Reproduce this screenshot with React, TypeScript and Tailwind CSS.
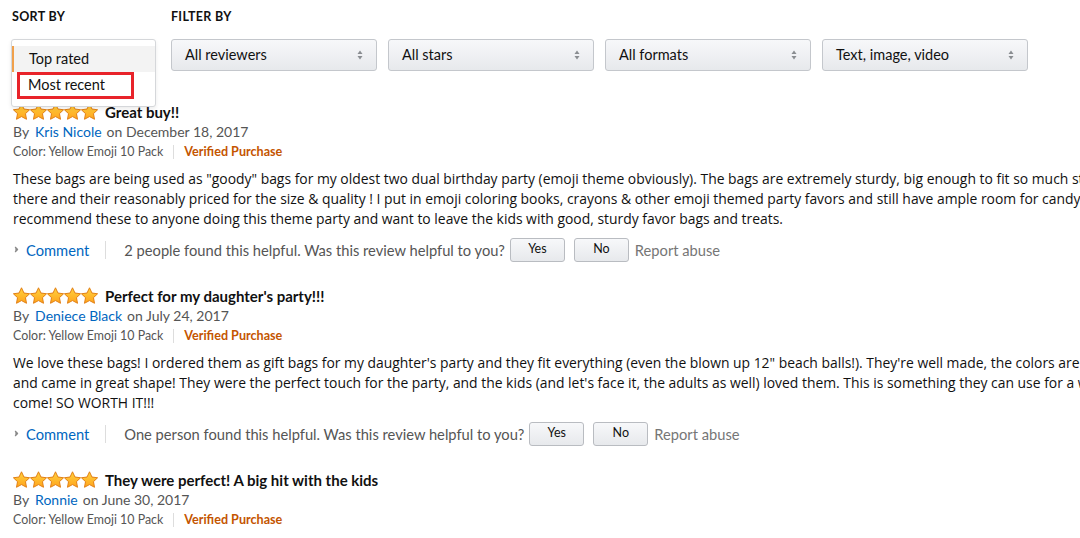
import { ChevronRight } from 'lucide-react'

const selects = ['All reviewers', 'All stars', 'All formats', 'Text, image, video']

const reviews = [
  {
    title: 'Great buy!!',
    author: 'Kris Nicole',
    date: 'December 18, 2017',
    lines: [
      'These bags are being used as "goody" bags for my oldest two dual birthday party (emoji theme obviously). The bags are extremely sturdy, big enough to fit so much stuff in',
      'there and their reasonably priced for the size & quality ! I put in emoji coloring books, crayons & other emoji themed party favors and still have ample room for candy (or whatever).',
      'recommend these to anyone doing this theme party and want to leave the kids with good, sturdy favor bags and treats.',
    ],
    helpful: '2 people found this helpful. Was this review helpful to you?',
  },
  {
    title: "Perfect for my daughter's party!!!",
    author: 'Deniece Black',
    date: 'July 24, 2017',
    lines: [
      'We love these bags! I ordered them as gift bags for my daughter\'s party and they fit everything (even the blown up 12" beach balls!). They\'re well made, the colors are bright',
      "and came in great shape! They were the perfect touch for the party, and the kids (and let's face it, the adults as well) loved them. This is something they can use for a while to",
      'come! SO WORTH IT!!!',
    ],
    helpful: 'One person found this helpful. Was this review helpful to you?',
  },
  {
    title: 'They were perfect! A big hit with the kids',
    author: 'Ronnie',
    date: 'June 30, 2017',
    lines: [],
    helpful: '',
  },
]

function Star() {
  return (
    <svg viewBox="1.3 1.1 21.4 20.8" className="w-[17px] h-[17px]">
      <defs>
        <linearGradient id="starFill" x1="0" y1="0" x2="0" y2="1">
          <stop offset="0" stopColor="#ffd23f" />
          <stop offset="1" stopColor="#ffa41c" />
        </linearGradient>
      </defs>
      <path
        d="M12 1.8l3.1 6.6 7.1.9-5.2 4.9 1.3 7.1L12 17.9l-6.3 3.4 1.3-7.1-5.2-4.9 7.1-.9z"
        fill="url(#starFill)"
        stroke="#e07b10"
        strokeWidth="1.2"
        strokeLinejoin="round"
      />
    </svg>
  )
}

function Stars() {
  return (
    <div className="flex items-center">
      {[0, 1, 2, 3, 4].map((i) => (
        <Star key={i} />
      ))}
    </div>
  )
}

function UpDown() {
  return (
    <svg viewBox="0 0 6 10" className="w-[6px] h-[10px]">
      <path d="M3 0.5L5.5 4H0.5z" fill="#8a8d91" />
      <path d="M3 9.5L5.5 6H0.5z" fill="#8a8d91" />
    </svg>
  )
}

function SelectBox({ label }: { label: string }) {
  return (
    <div className="w-[206px] h-[32px] rounded-[3px] border border-[#c4c7cc] bg-gradient-to-b from-[#f7f8fa] to-[#e7e9ec] flex items-center justify-between pl-[13px] pr-[13px] text-[14.5px] text-[#111]">
      <span>{label}</span>
      <UpDown />
    </div>
  )
}

function HelpButton({ label }: { label: string }) {
  return (
    <button className="w-[55px] h-[24px] rounded-[3px] border border-[#b9bcc1] bg-gradient-to-b from-[#f7f8fa] to-[#e7e9ec] text-[12.5px] text-[#111] flex items-center justify-center">
      {label}
    </button>
  )
}

function Review({ r }: { r: (typeof reviews)[number] }) {
  return (
    <div className="flex flex-col">
      <div className="flex items-center h-[20px] gap-[7px]">
        <Stars />
        <span className="font-bold text-[15px] text-[#111]">{r.title}</span>
      </div>
      <div className="h-[20px] flex items-center text-[14px] text-[#555]">
        <span>By</span>
        <span className="text-[#0066c0] ml-[6px]">{r.author}</span>
        <span className="ml-[5px]">on {r.date}</span>
      </div>
      <div className="h-[21px] flex items-center text-[12.4px] text-[#555]">
        <span>Color: Yellow Emoji 10 Pack</span>
        <span className="mx-[10px] w-px h-[14px] bg-[#ddd]" />
        <span className="font-bold text-[12.6px] text-[#c45500]">Verified Purchase</span>
      </div>
      {r.lines.length > 0 && (
        <>
          <div className="mt-[6px] font-['Open_Sans',sans-serif] text-[13.9px] leading-[20px] text-[#111] whitespace-nowrap">
            {r.lines.map((l, i) => (
              <div key={i}>{l}</div>
            ))}
          </div>
          <div className="mt-[9px] h-[24px] flex items-center text-[14.7px] whitespace-nowrap">
            <ChevronRight className="w-[9px] h-[9px] text-[#888] ml-[-1px]" strokeWidth={3} fill="#888" />
            <span className="text-[#0066c0] ml-[5px]">Comment</span>
            <span className="w-px h-[18px] bg-[#ddd] ml-[16px] mr-[18px]" />
            <span className="text-[#555]">{r.helpful}</span>
            <div className="flex gap-[9px] ml-[5px]">
              <HelpButton label="Yes" />
              <HelpButton label="No" />
            </div>
            <span className="text-[#767676] ml-[6px]">Report abuse</span>
          </div>
        </>
      )}
    </div>
  )
}

export default function App() {
  return (
    <div className="w-[1080px] h-[538px] overflow-hidden bg-white font-['Lato','Open_Sans',sans-serif] antialiased">
      {/* Sort / filter bar */}
      <div className="flex pt-[8px]">
        <div className="w-[171px] pl-[12px] text-[12.5px] font-bold tracking-[0.3px] text-[#111]">SORT BY</div>
        <div className="text-[12.5px] font-bold tracking-[0.3px] text-[#111]">FILTER BY</div>
      </div>
      <div className="flex items-start mt-[12px] pl-[11px]">
        <div className="relative w-[145px] h-[32px]">
          {/* open listbox */}
          <div className="absolute left-0 top-0 w-[145px] h-[68px] z-10 bg-white rounded-[3px] border border-[#d5d7da] shadow-[0_2px_4px_rgba(0,0,0,0.08)] pt-[6px]">
            <div className="h-[26px] bg-[#f3f3f3] border-l-2 border-[#f0a04b] flex items-center pl-[15px] text-[14.5px] text-[#111]">
              Top rated
            </div>
            <div className="relative h-[26px] flex items-center pl-[16px] text-[14.5px] text-[#111]">
              Most recent
              <div className="absolute left-[5px] top-[0px] w-[117px] h-[27px] border-[3px] border-[#e8232a]" />
            </div>
          </div>
        </div>
        <div className="flex gap-[11px] ml-[15px]">
          {selects.map((s) => (
            <SelectBox key={s} label={s} />
          ))}
        </div>
      </div>

      {/* Reviews */}
      <div className="flex flex-col gap-[24px] mt-[31px] pl-[13px]">
        {reviews.map((r) => (
          <Review key={r.author} r={r} />
        ))}
      </div>
    </div>
  )
}
